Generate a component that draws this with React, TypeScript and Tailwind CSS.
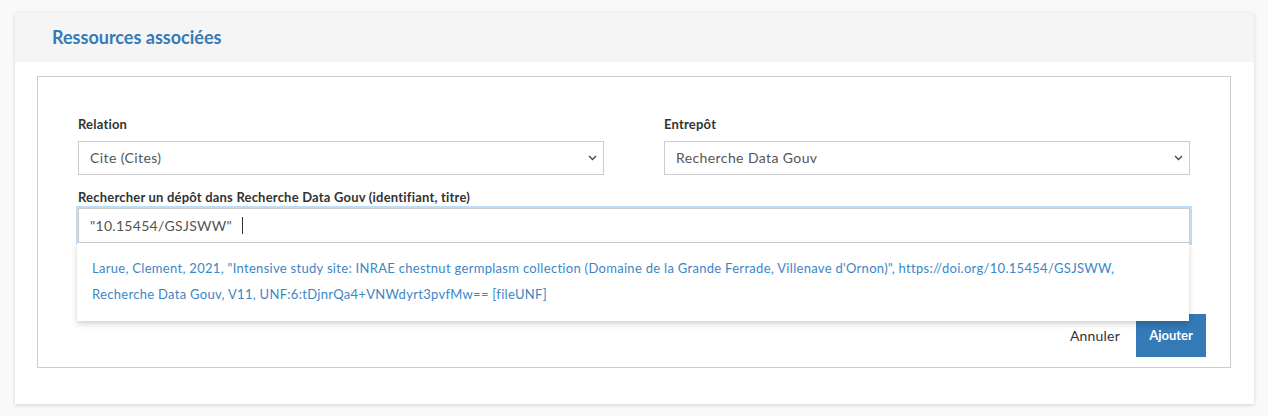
import { useState } from "react";

type Option = { value: string; label: string };

const relations: Option[] = [
  { value: "Cites", label: "Cite (Cites)" },
  { value: "IsCitedBy", label: "Est cité par (IsCitedBy)" },
  { value: "References", label: "Référence (References)" },
];

const depots: Option[] = [
  { value: "rdg", label: "Recherche Data Gouv" },
  { value: "zenodo", label: "Zenodo" },
];

function Chevron() {
  return (
    <svg width="9" height="6" viewBox="0 0 9 6" className="shrink-0">
      <path d="M1 1l3.5 3.5L8 1" fill="none" stroke="#444" strokeWidth="1.3" />
    </svg>
  );
}

function SelectBox({ value, options }: { value: string; options: Option[] }) {
  const current = options.find((o) => o.value === value);
  return (
    <div className="flex h-[34px] items-center justify-between border border-[#ccc] bg-white pl-[11px] pr-[6px] text-[14px] tracking-[0.4px] text-[#555]">
      <span>{current?.label}</span>
      <Chevron />
    </div>
  );
}

export default function App() {
  const [relation] = useState("Cites");
  const [depot] = useState("rdg");
  const [query] = useState('"10.15454/GSJSWW"');

  const result =
    'Larue, Clement, 2021, "Intensive study site: INRAE chestnut germplasm collection (Domaine de la Grande Ferrade, Villenave d\'Ornon)", https://doi.org/10.15454/GSJSWW, Recherche Data Gouv, V11, UNF:6:tDjnrQa4+VNWdyrt3pvfMw== [fileUNF]';

  return (
    <div className="min-h-[416px] bg-[#f9f9f9] px-[15px] pt-[13px] font-['Lato','Open_Sans',sans-serif] text-[#333]">
      <div className="mr-[-1px] bg-white pb-[36px] shadow-[0_1px_4px_rgba(0,0,0,0.16)]">
        <div className="flex h-[49px] items-center bg-[#f5f5f5] px-[37px]">
          <h2 className="text-[18px] font-bold text-[#337ab7]">Ressources associées</h2>
        </div>

        <div className="ml-[22px] mr-[23px] mt-[14px] border border-[#ccc] pb-[10px]">
          <div className="px-[40px] pt-[38px]">
            <div className="grid grid-cols-2 gap-[60px]">
              <div>
                <label className="block text-[13px] font-bold tracking-[0.2px] text-[#333]">Relation</label>
                <div className="mt-[6px]">
                  <SelectBox value={relation} options={relations} />
                </div>
              </div>
              <div>
                <label className="block text-[13px] font-bold tracking-[0.2px] text-[#333]">Entrepôt</label>
                <div className="mt-[6px]">
                  <SelectBox value={depot} options={depots} />
                </div>
              </div>
            </div>

            <label className="mt-[13px] block text-[13px] font-bold tracking-[0.2px] text-[#333]">
              Rechercher un dépôt dans Recherche Data Gouv (identifiant, titre)
            </label>
            <div className="relative mt-[1px]">
              <div className="flex h-[35px] items-center border border-[#ccc] bg-white pl-[11px] text-[14px] tracking-[0.3px] text-[#555] shadow-[0_0_0_2px_#bcdcf8]">
                <span>{query}</span>
                <span className="ml-[10px] h-[17px] w-px bg-[#333]" />
              </div>

              {/* suggestion list */}
              <div className="absolute left-[-1px] right-[1px] top-[35px] z-10 bg-white px-[15px] pb-[14px] pt-[12px] shadow-[0_3px_6px_rgba(0,0,0,0.18)]">
                <p className="text-[13px] leading-[26px] tracking-[0.3px] text-[#3c86c7]">{result}</p>
              </div>
            </div>
          </div>

          <div className="mt-[71px] flex items-center justify-end gap-[16px] pr-[24px]">
            <button className="text-[14px] tracking-[0.2px] text-[#333]">Annuler</button>
            <button className="h-[43px] w-[70px] bg-[#337ab7] text-[13px] font-bold text-white">Ajouter</button>
          </div>
        </div>
      </div>
    </div>
  );
}
